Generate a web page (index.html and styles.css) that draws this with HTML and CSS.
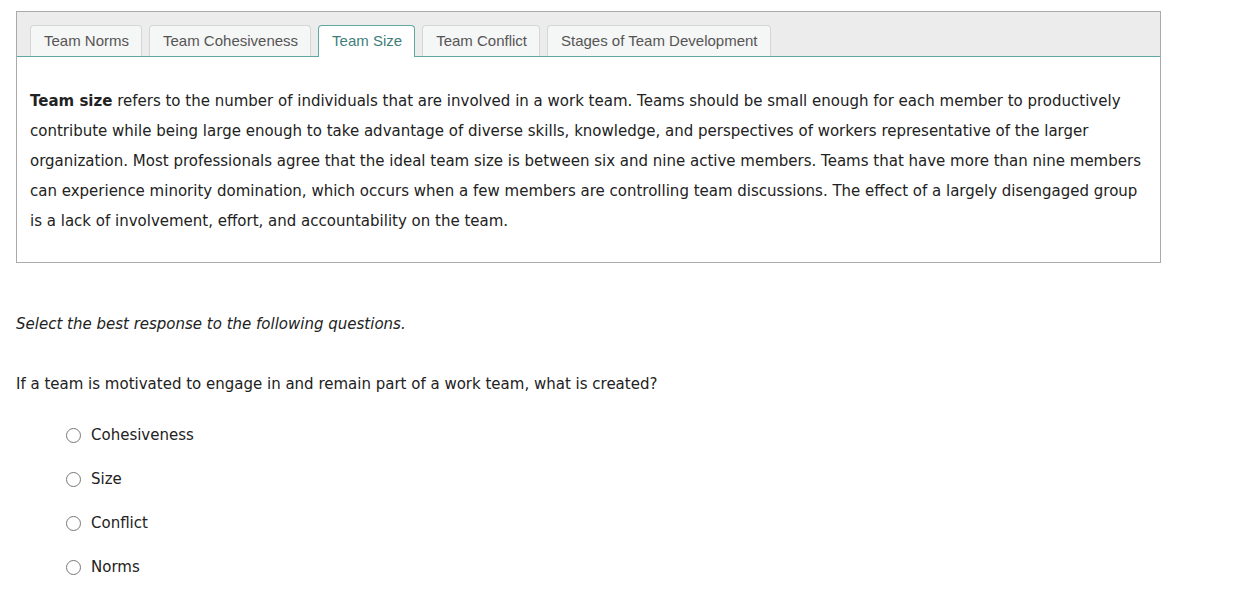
FILE: index.html
```html
<!DOCTYPE html>
<html lang="en">
<head>
    <meta charset="UTF-8">
    <title>Team Size</title>
    <link rel="stylesheet" href="styles.css">
</head>
<body>
    <div class="page">
        <div class="tab-box">
            <div class="tab-bar">
                <div class="tab">Team Norms</div>
                <div class="tab">Team Cohesiveness</div>
                <div class="tab active">Team Size</div>
                <div class="tab">Team Conflict</div>
                <div class="tab">Stages of Team Development</div>
            </div>
            <div class="tab-content">
                <p><strong>Team size</strong> refers to the number of individuals that are involved in a work team. Teams should be small enough for each member to productively contribute while being large enough to take advantage of diverse skills, knowledge, and perspectives of workers representative of the larger organization. Most professionals agree that the ideal team size is between six and nine active members. Teams that have more than nine members can experience minority domination, which occurs when a few members are controlling team discussions. The effect of a largely disengaged group is a lack of involvement, effort, and accountability on the team.</p>
            </div>
        </div>

        <p class="instructions">Select the best response to the following questions.</p>

        <div class="question">
            <p class="prompt">If a team is motivated to engage in and remain part of a work team, what is created?</p>
            <label class="choice"><input type="radio" name="q1"> Cohesiveness</label>
            <label class="choice"><input type="radio" name="q1"> Size</label>
            <label class="choice"><input type="radio" name="q1"> Conflict</label>
            <label class="choice"><input type="radio" name="q1"> Norms</label>
        </div>
    </div>
</body>
</html>
```

FILE: styles.css
```css
body {
    margin: 0;
    font-family: "DejaVu Sans", Verdana, sans-serif;
    font-size: 15px;
    color: #222;
    background: white;
}
.page {
    padding: 11px 16px;
}
.tab-box {
    width: 1143px;
    border: 1px solid #aaa;
}
.tab-bar {
    display: flex;
    gap: 7px;
    padding: 13px 13px 0;
    background: #ececec;
    border-bottom: 1px solid #5fa8a0;
}
.tab {
    font-family: "Liberation Sans", Arial, sans-serif;
    font-size: 15px;
    color: #555;
    background: #f5f6f6;
    border: 1px solid #d6d6d6;
    border-bottom: none;
    border-radius: 4px 4px 0 0;
    padding: 0 12px 0 13px;
    height: 30px;
    line-height: 30px;
    margin-bottom: -1px;
}
.tab.active {
    background: white;
    color: #3f7f7b;
    border-color: #5fa8a0;
    height: 31px;
}
.tab-content {
    padding: 29px 13px 26px;
}
.tab-content p {
    margin: 0;
    line-height: 30px;
}
.instructions {
    font-style: italic;
    margin: 46px 0 0;
    line-height: 30px;
}
.prompt {
    margin: 30px 0 14px;
    line-height: 30px;
}
.choice {
    display: flex;
    align-items: center;
    height: 44px;
    padding-left: 50px;
}
.choice input {
    appearance: none;
    width: 15px;
    height: 15px;
    margin: 0 10px 0 0;
    border: 1px solid #777;
    border-radius: 50%;
    background: white;
}
```
